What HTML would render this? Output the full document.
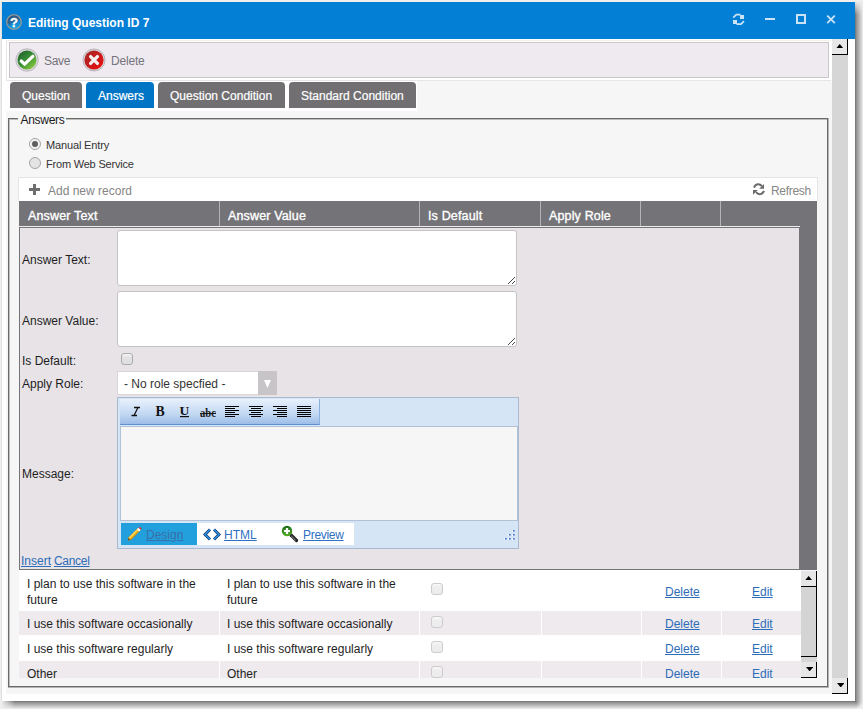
<!DOCTYPE html>
<html><head><meta charset="utf-8">
<style>
*{box-sizing:border-box;margin:0;padding:0}
html,body{width:863px;height:709px;overflow:hidden;background:#eeeeee}
body{position:relative;font-family:"Liberation Sans",sans-serif;font-size:12px;color:#1e1e1e}
.a{position:absolute}
.t{position:absolute;white-space:nowrap;line-height:14px}
#win{left:2px;top:2px;width:853px;height:699px;background:#fff}
#title{left:2px;top:2px;width:853px;height:37px;background:#0380d6}
.ttxt{color:#fff;font-weight:bold;font-size:12px}
.lnk{color:#2d6db8;text-decoration:underline}
.hdr{color:#fff;font-weight:normal;font-size:12.5px;-webkit-text-stroke:0.35px #fff;letter-spacing:0.15px}
.sep{position:absolute;width:1px;background:#b4b3b8}
.cb{position:absolute;width:12px;height:12px;border:1px solid #ababab;border-radius:3px;background:linear-gradient(#f6f6f6,#e2e2e2 35%,#dedede)}
.cb2{position:absolute;width:12px;height:12px;border:1px solid #cdcbcd;border-radius:3px;background:linear-gradient(#f8f8f8,#eeeeee 35%,#ececec)}
.rsep{position:absolute;width:1px;background:#fff}
</style></head><body>
<div class="a" style="left:1px;top:1px;width:855px;height:1px;background:#f6efe9"></div>
<div class="a" style="left:1px;top:2px;width:1px;height:700px;background:#e0e0e0"></div>
<div class="a" style="left:855px;top:2px;width:8px;height:700px;background:linear-gradient(90deg,#6c6c6c,#8c8c8c 14%,#b4b4b4 50%,#dcdcdc 85%,#eeeeee)"></div>
<div class="a" style="left:2px;top:701px;width:854px;height:8px;background:linear-gradient(180deg,#6c6c6c,#8c8c8c 14%,#b4b4b4 50%,#dcdcdc 85%,#eeeeee)"></div>
<div class="a" style="left:855px;top:701px;width:8px;height:8px;background:radial-gradient(circle at 0 0,#6c6c6c 0,#b4b4b4 4px,#eeeeee 8px)"></div>
<div class="a" style="left:855px;top:1px;width:8px;height:14px;background:linear-gradient(180deg,#eeeeee,rgba(238,238,238,0))"></div>
<div class="a" style="left:1px;top:701px;width:14px;height:8px;background:linear-gradient(90deg,#eeeeee,rgba(238,238,238,0))"></div>
<div id="win" class="a"></div>
<div id="title" class="a"></div>
<!-- help icon -->
<svg class="a" style="left:6px;top:14px" width="16" height="16" viewBox="0 0 16 16">
 <defs><linearGradient id="hg" x1="0.3" y1="0" x2="0.7" y2="1"><stop offset="0" stop-color="#2a5480"/><stop offset=".48" stop-color="#2f6898"/><stop offset=".52" stop-color="#167ec4"/><stop offset="1" stop-color="#12b0ee"/></linearGradient></defs>
 <circle cx="8" cy="8" r="7.3" fill="url(#hg)" stroke="#ac9e8e" stroke-width="1.1"/>
 <text x="8.1" y="12.7" text-anchor="middle" font-family="Liberation Sans" font-weight="bold" font-size="13" fill="#fff" stroke="#fff" stroke-width="0.3">?</text>
</svg>
<div class="t ttxt" style="left:28px;top:16px">Editing Question ID 7</div>
<!-- title icons -->
<svg class="a" style="left:729px;top:11px" width="19" height="17" viewBox="0 0 19 17" fill="#cbe3f6">
 <polyline points="4.2,6.7 7.3,3.7 11.5,3.7" fill="none" stroke="#cbe3f6" stroke-width="1.7"/>
 <rect x="11" y="4" width="4" height="4"/>
 <rect x="4" y="9" width="4" height="4"/>
 <polyline points="7.5,13.2 12,13.2 15,10.2" fill="none" stroke="#cbe3f6" stroke-width="1.7"/>
</svg>
<div class="a" style="left:765px;top:18px;width:10px;height:2px;background:#cbe3f6"></div>
<div class="a" style="left:796px;top:14px;width:10px;height:10px;border:2px solid #cbe3f6"></div>
<svg class="a" style="left:826px;top:15px" width="10" height="9" viewBox="0 0 10 9" stroke="#cbe3f6" stroke-width="1.8"><path d="M1.2 0.6 L8.8 8.2 M8.8 0.6 L1.2 8.2"/></svg>

<!-- content bg -->
<div class="a" style="left:6px;top:81px;width:826px;height:613px;background:#f6f6f6"></div>
<!-- toolbar wrapper -->
<div class="a" style="left:6px;top:40px;width:825px;height:41px;background:#fff;border-left:1px solid #e6e6e6;border-top:1px solid #f6eee8;border-bottom:1px solid #e6e6e6"></div>
<div class="a" style="left:9px;top:42px;width:820px;height:36px;background:#efeaef;border:1px solid #c9c9c9"></div>
<!-- save icon -->
<svg class="a" style="left:15px;top:48px" width="24" height="24" viewBox="0 0 24 24">
 <defs><linearGradient id="sg" x1="0.15" y1="0.1" x2="0.85" y2="0.9"><stop offset="0" stop-color="#23662e"/><stop offset=".5" stop-color="#3a9236"/><stop offset="1" stop-color="#88c83e"/></linearGradient></defs>
 <circle cx="12" cy="12" r="11.2" fill="#dcd8dc" stroke="#bcb8c0" stroke-width="1"/>
 <circle cx="12" cy="12" r="9.5" fill="url(#sg)"/>
 <path d="M6.2 13 L9.6 16.2 L17.8 8.3" fill="none" stroke="#fff" stroke-width="3.2" stroke-linecap="round" stroke-linejoin="round"/>
</svg>
<div class="t" style="left:44px;top:54px;color:#74747c;font-size:12px;letter-spacing:-0.3px">Save</div>
<svg class="a" style="left:82px;top:48px" width="24" height="24" viewBox="0 0 24 24">
 <defs><linearGradient id="dg" x1="0" y1="0" x2="1" y2="1"><stop offset="0" stop-color="#a02828"/><stop offset=".6" stop-color="#d01818"/><stop offset="1" stop-color="#f01010"/></linearGradient></defs>
 <circle cx="12" cy="12" r="11" fill="#d8d4d8" stroke="#b8b4b8" stroke-width="1"/>
 <circle cx="12" cy="12" r="9.6" fill="url(#dg)"/>
 <path d="M8.6 8.6 L15.4 15.4 M15.4 8.6 L8.6 15.4" fill="none" stroke="#f4f0f0" stroke-width="3.3" stroke-linecap="round"/>
</svg>
<div class="t" style="left:111px;top:54px;color:#74747c;font-size:12px;letter-spacing:-0.2px">Delete</div>

<!-- tabs -->
<div class="a" style="left:6px;top:81px;width:411px;height:30px;background:#fff"></div>
<div class="a" style="left:10px;top:82px;width:72px;height:26px;background:#716f72;border-radius:4px 4px 0 0"></div>
<div class="t" style="left:22px;top:89px;color:#fff;font-size:12px;-webkit-text-stroke:0.2px #fff">Question</div>
<div class="a" style="left:86px;top:82px;width:68px;height:26px;background:#0075c6;border-radius:4px 4px 0 0"></div>
<div class="t" style="left:98px;top:89px;color:#fff;font-size:12px;-webkit-text-stroke:0.2px #fff">Answers</div>
<div class="a" style="left:158px;top:82px;width:127px;height:26px;background:#716f72;border-radius:4px 4px 0 0"></div>
<div class="t" style="left:170px;top:89px;color:#fff;font-size:12px;-webkit-text-stroke:0.2px #fff">Question Condition</div>
<div class="a" style="left:289px;top:82px;width:127px;height:26px;background:#716f72;border-radius:4px 4px 0 0"></div>
<div class="t" style="left:301px;top:89px;color:#fff;font-size:12px;-webkit-text-stroke:0.2px #fff">Standard Condition</div>

<!-- outer scrollbar -->
<div class="a" style="left:832px;top:39px;width:16px;height:655px;background:#d6d6d6"></div>
<div class="a" style="left:832px;top:39px;width:16px;height:16px;background:#e8e8e8;border-right:1px solid #000;border-bottom:1px solid #000"></div>
<svg class="a" style="left:836px;top:43.5px" width="7.5" height="4.5" viewBox="0 0 7.5 4.5"><polygon points="0,4.5 3.75,0 7.5,4.5" fill="#000"/></svg>
<div class="a" style="left:832px;top:678px;width:16px;height:16px;background:#e8e8e8;border-right:1px solid #000;border-bottom:1px solid #000"></div>
<svg class="a" style="left:836.8px;top:682.8px" width="7.5" height="4.5" viewBox="0 0 7.5 4.5"><polygon points="0,0 7.5,0 3.75,4.5" fill="#000"/></svg>

<!-- fieldset -->
<div class="a" style="left:8px;top:118px;width:821px;height:570px;border:1px solid #b4b4b4"></div>
<div class="a" style="left:8px;top:118px;width:820px;height:569px;border:1px solid #6a6a6a"></div>
<div class="a" style="left:9px;top:119px;width:818px;height:567px;border-left:1px solid #bdbdbd;border-top:1px solid #bdbdbd"></div>
<div class="a" style="left:18px;top:112px;width:48px;height:12px;background:#f6f6f6"></div>
<div class="t" style="left:20.5px;top:113px;color:#1a1a1a;font-size:12px;letter-spacing:-0.3px">Answers</div>

<!-- radios -->
<div class="a" style="left:29px;top:138px;width:12px;height:12px;border-radius:50%;border:1px solid #a4a4a4;background:#f2f2f2"></div>
<div class="a" style="left:32px;top:141px;width:6px;height:6px;border-radius:50%;background:#5e5e5e"></div>
<div class="t" style="left:46px;top:138px;font-size:11px;color:#333;letter-spacing:-0.15px">Manual Entry</div>
<div class="a" style="left:29px;top:157px;width:12px;height:12px;border-radius:50%;border:1px solid #a4a4a4;background:#e4e4e4"></div>
<div class="t" style="left:46px;top:157px;font-size:11px;color:#333;letter-spacing:-0.2px">From Web Service</div>

<!-- grid toolbar -->
<div class="a" style="left:18px;top:177px;width:800px;height:24px;background:#fff;border:1px solid #e4e4e4;border-bottom:none"></div>
<div class="a" style="left:29px;top:188px;width:11px;height:3px;background:#6e6e6e"></div>
<div class="a" style="left:33px;top:184px;width:3px;height:11px;background:#6e6e6e"></div>
<div class="t" style="left:48px;top:184px;color:#858585;font-size:12px">Add new record</div>
<svg class="a" style="left:749px;top:180px" width="20" height="18" viewBox="0 0 20 18">
 <path d="M5 7.6 C6.5 3.6 10.5 3.2 13 6.2" fill="none" stroke="#6a6a6a" stroke-width="2"/>
 <polygon points="15,4 15,8.8 10.2,8.8" fill="#6a6a6a"/>
 <polygon points="4,10 8.8,10 4,14.8" fill="#6a6a6a"/>
 <path d="M7 12.2 C9.5 15.2 13.5 14.8 15 10.8" fill="none" stroke="#6a6a6a" stroke-width="2"/>
</svg>
<div class="t" style="left:771px;top:184px;color:#858585;font-size:12px;letter-spacing:-0.3px">Refresh</div>

<!-- grid header -->
<div class="a" style="left:19px;top:201px;width:798px;height:26px;background:#737378"></div>
<div class="sep" style="left:219px;top:201px;height:25px"></div>
<div class="sep" style="left:419px;top:201px;height:25px"></div>
<div class="sep" style="left:540px;top:201px;height:25px"></div>
<div class="sep" style="left:640px;top:201px;height:25px"></div>
<div class="sep" style="left:720px;top:201px;height:25px"></div>
<div class="t hdr" style="left:28px;top:208.5px">Answer Text</div>
<div class="t hdr" style="left:228px;top:208.5px">Answer Value</div>
<div class="t hdr" style="left:428px;top:208.5px">Is Default</div>
<div class="t hdr" style="left:549px;top:208.5px">Apply Role</div>
<div class="a" style="left:18px;top:226px;width:782px;height:1px;background:#ececec"></div>

<!-- edit form -->
<div class="a" style="left:19px;top:227px;width:798px;height:343px;background:#737378"></div>
<div class="a" style="left:20px;top:228px;width:779px;height:341px;background:#e7e3e7"></div>
<div class="t" style="left:22px;top:253px">Answer Text:</div>
<div class="a" style="left:117px;top:230px;width:400px;height:56px;background:#fff;border:1px solid #c4c4c4;border-radius:3px"></div>
<div class="t" style="left:22px;top:314px">Answer Value:</div>
<div class="a" style="left:117px;top:291px;width:400px;height:56px;background:#fff;border:1px solid #c4c4c4;border-radius:3px"></div>
<svg class="a" style="left:508px;top:277px" width="7" height="7" viewBox="0 0 7 7" fill="#4a4a4a"><rect x="0" y="6" width="1" height="1"/><rect x="1" y="5" width="1" height="1"/><rect x="2" y="4" width="1" height="1"/><rect x="3" y="3" width="1" height="1"/><rect x="4" y="2" width="1" height="1"/><rect x="5" y="1" width="1" height="1"/><rect x="6" y="0" width="1" height="1"/><rect x="4" y="6" width="1" height="1"/><rect x="5" y="5" width="1" height="1"/><rect x="6" y="4" width="1" height="1"/></svg>
<svg class="a" style="left:508px;top:338px" width="7" height="7" viewBox="0 0 7 7" fill="#4a4a4a"><rect x="0" y="6" width="1" height="1"/><rect x="1" y="5" width="1" height="1"/><rect x="2" y="4" width="1" height="1"/><rect x="3" y="3" width="1" height="1"/><rect x="4" y="2" width="1" height="1"/><rect x="5" y="1" width="1" height="1"/><rect x="6" y="0" width="1" height="1"/><rect x="4" y="6" width="1" height="1"/><rect x="5" y="5" width="1" height="1"/><rect x="6" y="4" width="1" height="1"/></svg>
<div class="t" style="left:22px;top:354px">Is Default:</div>
<div class="cb" style="left:121px;top:353px"></div>
<div class="t" style="left:22px;top:377px">Apply Role:</div>
<div class="a" style="left:117px;top:371px;width:160px;height:24px;background:#fff;border:1px solid #d8d6d8"></div>
<div class="a" style="left:258px;top:371px;width:19px;height:24px;background:#c8c5c8"></div>
<svg class="a" style="left:264px;top:380px" width="7" height="8" viewBox="0 0 7 8"><polygon points="0,0 7,0 3.5,8" fill="#fff"/></svg>
<div class="t" style="left:124px;top:377px;color:#333">- No role specfied -</div>

<!-- editor -->
<div class="a" style="left:117px;top:397px;width:402px;height:152px;background:#d6e5f5;border:1px solid #a9bad0"></div>
<div class="a" style="left:120px;top:399px;width:200px;height:26px;background:linear-gradient(#e8f1fc,#c2d8f2 60%,#9dbde8);border-bottom:1px solid #5e8fd0;border-right:1px solid #8ab0e0"></div>
<svg class="a" style="left:120px;top:399px" width="200" height="26" viewBox="0 0 200 26">
 <path d="M14 8.5 H20 M18 8.5 L14 16.5 M11.5 16.5 H17" stroke="#111" stroke-width="1.3" fill="none"/>
 <text x="35.5" y="17.2" font-family="Liberation Serif" font-weight="bold" font-size="13.8" fill="#111">B</text>
 <text x="59.6" y="15.6" font-family="Liberation Serif" font-weight="bold" font-size="13.5" fill="#111">U</text>
 <rect x="60" y="17" width="9" height="1.2" fill="#111"/>
 <text x="80" y="17.6" font-family="Liberation Serif" font-weight="bold" font-size="12.5" fill="#1a1a1a" textLength="16" lengthAdjust="spacingAndGlyphs">abc</text>
 <rect x="80" y="14" width="16" height="1" fill="#1a1a1a"/>
 <g fill="#000">
  <rect x="105" y="7" width="14" height="1"/><rect x="105" y="9" width="10" height="1"/><rect x="105" y="11" width="14" height="1"/><rect x="105" y="13" width="10" height="1"/><rect x="105" y="15" width="14" height="1"/><rect x="105" y="17" width="10" height="1"/>
  <rect x="129" y="7" width="14" height="1"/><rect x="131" y="9" width="10" height="1"/><rect x="129" y="11" width="14" height="1"/><rect x="131" y="13" width="10" height="1"/><rect x="129" y="15" width="14" height="1"/><rect x="131" y="17" width="10" height="1"/>
  <rect x="153" y="7" width="14" height="1"/><rect x="157" y="9" width="10" height="1"/><rect x="153" y="11" width="14" height="1"/><rect x="157" y="13" width="10" height="1"/><rect x="153" y="15" width="14" height="1"/><rect x="157" y="17" width="10" height="1"/>
  <rect x="177" y="7" width="14" height="1"/><rect x="177" y="9" width="14" height="1"/><rect x="177" y="11" width="14" height="1"/><rect x="177" y="13" width="14" height="1"/><rect x="177" y="15" width="14" height="1"/><rect x="177" y="17" width="14" height="1"/>
 </g>
</svg>
<div class="a" style="left:120px;top:426px;width:398px;height:95px;background:#f6f6f6;border:1px solid #b2c2d6"></div>
<div class="t" style="left:22px;top:467px">Message:</div>
<div class="a" style="left:121px;top:523px;width:76px;height:22px;background:#22a0dd"></div>
<div class="a" style="left:197px;top:523px;width:157px;height:22px;background:#fff"></div>
<svg class="a" style="left:126px;top:526px" width="16" height="16" viewBox="0 0 16 16">
 <path d="M2.2 14.2 L3 11.3 L11.8 2.5 L13.9 4.6 L5.1 13.4 Z" fill="#f2b81c" stroke="#c87a08" stroke-width=".8"/>
 <path d="M3 11.3 L11.8 2.5 L12.6 3.3 L3.8 12.1 Z" fill="#ffe070"/>
 <path d="M11 3.3 L12.6 1.7 L14.7 3.8 L13.1 5.4 Z" fill="#fff"/>
 <path d="M12.6 1.7 L13.6 0.7 L15.7 2.8 L14.7 3.8 Z" fill="#e03030"/>
 <path d="M2.2 14.2 L2.6 12.6 L3.8 13.8 Z" fill="#222"/>
</svg>
<div class="t lnk" style="left:146px;top:528px;color:#3a6ea8">Design</div>
<svg class="a" style="left:203px;top:528px" width="18" height="13" viewBox="0 0 18 13" fill="none">
 <path d="M7 1.5 L2 6.5 L7 11.5" stroke="#123c70" stroke-width="2.9"/>
 <path d="M7 1.5 L2 6.5 L7 11.5" stroke="#2b95ea" stroke-width="1.3"/>
 <path d="M11 1.5 L16 6.5 L11 11.5" stroke="#123c70" stroke-width="2.9"/>
 <path d="M11 1.5 L16 6.5 L11 11.5" stroke="#2b95ea" stroke-width="1.3"/>
</svg>
<svg class="a" style="left:281px;top:525px" width="18" height="18" viewBox="0 0 18 18">
 <path d="M10 10 L15.5 15.5" stroke="#222" stroke-width="3.2" stroke-linecap="round"/>
 <path d="M10.2 10.8 L14.8 15.4" stroke="#999" stroke-width="1"/>
 <defs><linearGradient id="mg" x1="0" y1="0" x2="0" y2="1"><stop offset="0" stop-color="#1a6a1a"/><stop offset="1" stop-color="#58b028"/></linearGradient></defs>
 <circle cx="6" cy="6" r="5.2" fill="url(#mg)"/>
 <path d="M3 6 H9 M6 3 V9" stroke="#fff" stroke-width="2.2"/>
</svg>
<svg class="a" style="left:500px;top:525px" width="18" height="18" viewBox="500 525 18 18"><rect x="512" y="530.5" width="2" height="1.5" fill="#fff"/><rect x="508" y="534.5" width="2" height="1.5" fill="#fff"/><rect x="512" y="534.5" width="2" height="1.5" fill="#fff"/><rect x="504" y="538.5" width="2" height="1.5" fill="#fff"/><rect x="508" y="538.5" width="2" height="1.5" fill="#fff"/><rect x="512" y="538.5" width="2" height="1.5" fill="#fff"/><rect x="513" y="530" width="1.6" height="1.6" fill="#3d6cc8"/><rect x="509" y="534" width="1.6" height="1.6" fill="#3d6cc8"/><rect x="513" y="534" width="1.6" height="1.6" fill="#3d6cc8"/><rect x="505" y="538" width="1.6" height="1.6" fill="#3d6cc8"/><rect x="509" y="538" width="1.6" height="1.6" fill="#3d6cc8"/><rect x="513" y="538" width="1.6" height="1.6" fill="#3d6cc8"/></svg>
<div class="t lnk" style="left:224px;top:528px;color:#2e70c2">HTML</div>
<div class="t lnk" style="left:303px;top:528px;color:#2e70c2;letter-spacing:-0.3px">Preview</div>
<div class="t lnk" style="left:21px;top:554px">Insert</div>
<div class="t lnk" style="left:54px;top:554px;letter-spacing:-0.3px">Cancel</div>

<!-- rows -->
<div class="a" style="left:19px;top:570px;width:782px;height:41px;background:#fff"></div>
<div class="a" style="left:19px;top:611px;width:782px;height:24px;background:#eeeaee"></div>
<div class="a" style="left:19px;top:635px;width:782px;height:26px;background:#fff"></div>
<div class="a" style="left:19px;top:661px;width:782px;height:17px;background:#eeeaee"></div>
<div class="rsep" style="left:219px;top:611px;height:24px"></div><div class="rsep" style="left:419px;top:611px;height:24px"></div><div class="rsep" style="left:541px;top:611px;height:24px"></div><div class="rsep" style="left:641px;top:611px;height:24px"></div><div class="rsep" style="left:721px;top:611px;height:24px"></div>
<div class="rsep" style="left:219px;top:661px;height:17px"></div><div class="rsep" style="left:419px;top:661px;height:17px"></div><div class="rsep" style="left:541px;top:661px;height:17px"></div><div class="rsep" style="left:641px;top:661px;height:17px"></div><div class="rsep" style="left:721px;top:661px;height:17px"></div>

<div class="t" style="left:27px;top:576px;line-height:16px">I plan to use this software in the<br>future</div>
<div class="t" style="left:227px;top:576px;line-height:16px">I plan to use this software in the<br>future</div>
<div class="cb2" style="left:431px;top:583px"></div>
<div class="t lnk" style="left:665px;top:585px">Delete</div>
<div class="t lnk" style="left:752px;top:585px">Edit</div>

<div class="t" style="left:27px;top:617px">I use this software occasionally</div>
<div class="t" style="left:227px;top:617px">I use this software occasionally</div>
<div class="cb2" style="left:431px;top:616px"></div>
<div class="t lnk" style="left:665px;top:617px">Delete</div>
<div class="t lnk" style="left:752px;top:617px">Edit</div>

<div class="t" style="left:27px;top:642px">I use this software regularly</div>
<div class="t" style="left:227px;top:642px">I use this software regularly</div>
<div class="cb2" style="left:431px;top:641px"></div>
<div class="t lnk" style="left:665px;top:642px">Delete</div>
<div class="t lnk" style="left:752px;top:642px">Edit</div>

<div class="a" style="left:19px;top:661px;width:782px;height:17px;overflow:hidden">
 <div class="t" style="left:8px;top:6px">Other</div>
 <div class="t" style="left:208px;top:6px">Other</div>
 <div class="cb2" style="left:412px;top:5px"></div>
 <div class="t lnk" style="left:646px;top:6px">Delete</div>
 <div class="t lnk" style="left:733px;top:6px">Edit</div>
</div>

<!-- inner scrollbar -->
<div class="a" style="left:801px;top:571px;width:16px;height:107px;background:#d6d6d6"></div>
<div class="a" style="left:801px;top:571px;width:16px;height:16px;background:#e6e6e6;border-right:1px solid #000;border-bottom:1px solid #000"></div>
<svg class="a" style="left:805px;top:575.6px" width="7.3" height="4.4" viewBox="0 0 7.3 4.4"><polygon points="0,4.4 3.65,0 7.3,4.4" fill="#000"/></svg>
<div class="a" style="left:801px;top:587px;width:16px;height:70px;background:#d4d4d4;border-right:1px solid #000;border-bottom:1px solid #000"></div>
<div class="a" style="left:801px;top:662px;width:16px;height:16px;background:#e6e6e6;border-right:1px solid #000;border-bottom:1px solid #000"></div>
<svg class="a" style="left:805.5px;top:666.8px" width="7.3" height="4.4" viewBox="0 0 7.3 4.4"><polygon points="0,0 7.3,0 3.65,4.4" fill="#000"/></svg>
</body></html>
